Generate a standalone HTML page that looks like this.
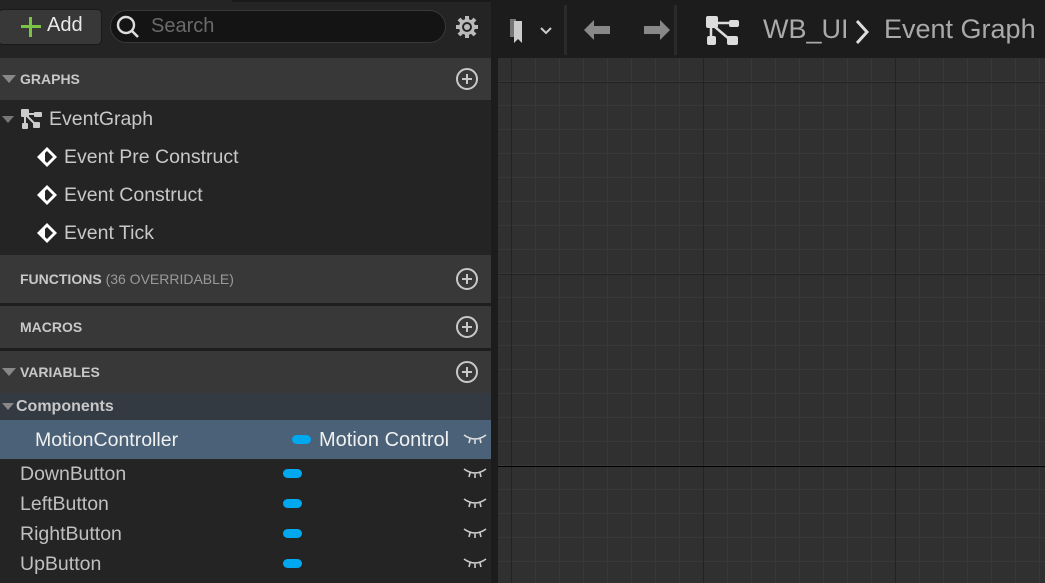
<!DOCTYPE html>
<html><head><style>
*{margin:0;padding:0;box-sizing:border-box}
body{width:1045px;height:583px;overflow:hidden;background:#242424;font-family:"Liberation Sans",sans-serif;position:relative;color:#c0c0c0}
.abs{position:absolute}
#left{left:0;top:0;width:491px;height:583px;background:#242424}
#strip{left:491px;top:0;width:7px;height:583px;background:#1c1c1c}
#graph{left:498px;top:0;width:547px;height:583px;background-color:#303030;
background-image:
linear-gradient(to right,transparent 13px,#232323 13px,#232323 14px,transparent 14px),
linear-gradient(to bottom,transparent 82px,#222 82px,#222 83px,transparent 83px),
linear-gradient(to right,transparent 23px,#383838 23px),
linear-gradient(to bottom,transparent 23px,#383838 23px);
background-size:192px 100%,100% 192px,24px 100%,100% 24px;
background-position:0 0,0 0,-10px 0,0 -14px}
.hline{left:498px;width:547px;height:1px;background:#000}
#tb{left:498px;top:0;width:547px;height:58px;background:#1c1c1c}
.hdr{left:0;width:491px;background:#383838;font-weight:bold;font-size:14px;color:#c8c8c8}
.hdr span.t{position:absolute;left:20px;top:50%;transform:translateY(-50%)}
.plus{position:absolute;right:13px;top:50%;margin-top:-11px;width:22px;height:22px;border:2px solid #c8c8c8;border-radius:50%}
.plus:before{content:"";position:absolute;left:4px;top:8px;width:10px;height:2px;background:#c8c8c8}
.plus:after{content:"";position:absolute;left:8px;top:4px;width:2px;height:10px;background:#c8c8c8}
.tri{position:absolute;left:2px;top:50%;margin-top:-4px;width:0;height:0;border-left:7px solid transparent;border-right:7px solid transparent;border-top:8px solid #888}
.item{left:64px;font-size:19.5px;color:#c8c8c8}
.dia{position:absolute;left:36px;width:22px;height:22px}
.var{font-size:19.5px;color:#c0c0c0}
.pill{width:19px;height:9px;border-radius:5px;background:#00a8f0}
</style></head><body>
<div id="left" class="abs"></div>
<div id="strip" class="abs"></div>
<div id="graph" class="abs"></div>
<div class="abs hline" style="top:466px"></div>
<div id="tb" class="abs"></div>
<div class="abs" style="left:232px;top:0;width:259px;height:2px;background:#1a1a1a"></div>

<div class="abs" style="left:-2px;top:9px;width:104px;height:36px;background:#383838;border:1px solid #1a1a1a;border-radius:5px"></div>
<div class="abs" style="left:21px;top:25px;width:20px;height:3px;background:#7cc444"></div>
<div class="abs" style="left:29px;top:17px;width:3px;height:20px;background:#7cc444"></div>
<div class="abs" style="left:47px;top:14px;font-size:20px;color:#e8e8e8">Add</div>
<div class="abs" style="left:110px;top:10px;width:336px;height:33px;background:#141414;border:1px solid #3a3a3a;border-radius:17px"></div>
<svg class="abs" style="left:114px;top:13px" width="28" height="28" viewBox="0 0 28 28"><circle cx="12" cy="12" r="8" fill="none" stroke="#ddd" stroke-width="2.4"/><line x1="18" y1="18" x2="24" y2="24" stroke="#ddd" stroke-width="2.6"/></svg>
<div class="abs" style="left:151px;top:15px;font-size:20px;color:#6a6a6a">Search</div>
<svg class="abs" style="left:455px;top:15px" width="24" height="24" viewBox="0 0 24 24"><g fill="#bbb"><circle cx="12" cy="12" r="8"/><g stroke="#bbb" stroke-width="4"><line x1="12" y1="1" x2="12" y2="23"/><line x1="1" y1="12" x2="23" y2="12"/><line x1="4" y1="4" x2="20" y2="20"/><line x1="20" y1="4" x2="4" y2="20"/></g></g><circle cx="12" cy="12" r="5" fill="#242424"/><circle cx="12" cy="12" r="3" fill="#bbb"/></svg>

<div class="abs hdr" style="top:58px;height:42px"><div class="tri"></div><span class="t">GRAPHS</span><div class="plus"></div></div>
<div class="abs" style="left:2px;top:116px;width:0;height:0;border-left:6px solid transparent;border-right:6px solid transparent;border-top:7px solid #777"></div>
<svg class="abs" style="left:20px;top:108px" width="24" height="22" viewBox="0 0 24 22"><g fill="#ccc"><rect x="1" y="1" width="8" height="8" rx="1"/><rect x="14" y="4" width="8" height="5" rx="1"/><rect x="2" y="15" width="6" height="6" rx="1"/><rect x="13" y="14" width="7" height="6" rx="1"/></g><g stroke="#ccc" stroke-width="2"><line x1="8" y1="6" x2="15" y2="6"/><line x1="5" y1="8" x2="5" y2="16"/><line x1="7" y1="8" x2="15" y2="16"/></g></svg>
<div class="abs item" style="left:49px;top:108px">EventGraph</div>

<svg class="abs dia" style="top:146px" viewBox="0 0 22 22"><path d="M11 1 L21 11 L11 21 L1 11Z" fill="#fff"/><path d="M11 5 L17 11 L11 17 L9 15 L9 7Z" fill="#242424"/></svg>
<div class="abs item" style="top:146px">Event Pre Construct</div>
<svg class="abs dia" style="top:184px" viewBox="0 0 22 22"><path d="M11 1 L21 11 L11 21 L1 11Z" fill="#fff"/><path d="M11 5 L17 11 L11 17 L9 15 L9 7Z" fill="#242424"/></svg>
<div class="abs item" style="top:184px">Event Construct</div>
<svg class="abs dia" style="top:222px" viewBox="0 0 22 22"><path d="M11 1 L21 11 L11 21 L1 11Z" fill="#fff"/><path d="M11 5 L17 11 L11 17 L9 15 L9 7Z" fill="#242424"/></svg>
<div class="abs item" style="top:222px">Event Tick</div>

<div class="abs hdr" style="top:255px;height:48px"><span class="t">FUNCTIONS <span style="font-weight:normal;color:#9a9a9a">(36 OVERRIDABLE)</span></span><div class="plus"></div></div>
<div class="abs" style="left:0;top:303px;width:491px;height:3px;background:#1e1e1e"></div>
<div class="abs hdr" style="top:306px;height:42px"><span class="t">MACROS</span><div class="plus"></div></div>
<div class="abs" style="left:0;top:348px;width:491px;height:3px;background:#1e1e1e"></div>
<div class="abs hdr" style="top:351px;height:42px"><div class="tri"></div><span class="t">VARIABLES</span><div class="plus"></div></div>
<div class="abs" style="left:0;top:393px;width:491px;height:27px;background:#343a42"></div>
<div class="abs" style="left:2px;top:403px;width:0;height:0;border-left:6px solid transparent;border-right:6px solid transparent;border-top:7px solid #888"></div>
<div class="abs" style="left:16px;top:398px;font-size:16px;font-weight:bold;color:#c8c8c8">Components</div>
<div class="abs" style="left:0;top:420px;width:491px;height:39px;background:#4a6177"></div>
<div class="abs var" style="left:35px;top:429px;color:#f0f0f0">MotionController</div>
<div class="abs pill" style="left:292px;top:435px"></div>
<div class="abs var" style="left:319px;top:429px;color:#f0f0f0;font-size:20px">Motion Control</div>

<div class="abs var" style="left:20px;top:463px">DownButton</div>
<div class="abs var" style="left:20px;top:493px">LeftButton</div>
<div class="abs var" style="left:20px;top:523px">RightButton</div>
<div class="abs var" style="left:20px;top:553px">UpButton</div>
<div class="abs pill" style="left:283px;top:469px"></div>
<div class="abs pill" style="left:283px;top:499px"></div>
<div class="abs pill" style="left:283px;top:529px"></div>
<div class="abs pill" style="left:283px;top:559px"></div>
<svg class="abs" style="left:463px;top:432px" width="24" height="14" viewBox="0 0 24 14"><g stroke="#ddd" stroke-width="1.6" fill="none"><path d="M1 3 Q12 11 23 3"/><line x1="7" y1="7" x2="6" y2="11"/><line x1="12" y1="8" x2="12" y2="12"/><line x1="17" y1="7" x2="18" y2="11"/></g></svg>
<svg class="abs" style="left:463px;top:466px" width="24" height="14" viewBox="0 0 24 14"><g stroke="#ccc" stroke-width="1.6" fill="none"><path d="M1 3 Q12 11 23 3"/><line x1="7" y1="7" x2="6" y2="11"/><line x1="12" y1="8" x2="12" y2="12"/><line x1="17" y1="7" x2="18" y2="11"/></g></svg>
<svg class="abs" style="left:463px;top:496px" width="24" height="14" viewBox="0 0 24 14"><g stroke="#ccc" stroke-width="1.6" fill="none"><path d="M1 3 Q12 11 23 3"/><line x1="7" y1="7" x2="6" y2="11"/><line x1="12" y1="8" x2="12" y2="12"/><line x1="17" y1="7" x2="18" y2="11"/></g></svg>
<svg class="abs" style="left:463px;top:526px" width="24" height="14" viewBox="0 0 24 14"><g stroke="#ccc" stroke-width="1.6" fill="none"><path d="M1 3 Q12 11 23 3"/><line x1="7" y1="7" x2="6" y2="11"/><line x1="12" y1="8" x2="12" y2="12"/><line x1="17" y1="7" x2="18" y2="11"/></g></svg>
<svg class="abs" style="left:463px;top:556px" width="24" height="14" viewBox="0 0 24 14"><g stroke="#ccc" stroke-width="1.6" fill="none"><path d="M1 3 Q12 11 23 3"/><line x1="7" y1="7" x2="6" y2="11"/><line x1="12" y1="8" x2="12" y2="12"/><line x1="17" y1="7" x2="18" y2="11"/></g></svg>

<svg class="abs" style="left:508px;top:17px" width="48" height="28" viewBox="0 0 48 28"><path d="M2 2 H8 V20 H2Z" fill="#777"/><path d="M6 4 H14 V26 L10 22 L6 26Z" fill="#ccc"/><path d="M33 11 L38 16 L43 11" stroke="#ccc" stroke-width="2" fill="none"/></svg>
<div class="abs" style="left:564px;top:5px;width:3px;height:50px;background:#2a2a2a"></div>
<svg class="abs" style="left:582px;top:17px" width="90" height="26" viewBox="0 0 90 26"><path d="M2 13 L12 3 V9 H28 V17 H12 V23Z" fill="#888"/><path d="M88 13 L78 3 V9 H62 V17 H78 V23Z" fill="#888"/></svg>
<div class="abs" style="left:674px;top:5px;width:3px;height:50px;background:#2a2a2a"></div>
<svg class="abs" style="left:705px;top:15px" width="36" height="32" viewBox="0 0 36 32"><g fill="#ddd"><rect x="1" y="1" width="12" height="12" rx="2"/><rect x="24" y="5" width="10" height="7" rx="2"/><rect x="2" y="21" width="9" height="9" rx="2"/><rect x="22" y="21" width="11" height="9" rx="2"/></g><g stroke="#ddd" stroke-width="2.5"><line x1="12" y1="8" x2="25" y2="8"/><line x1="6" y1="12" x2="6" y2="22"/><line x1="10" y1="12" x2="23" y2="23"/></g></svg>
<div class="abs" style="left:763px;top:14px;font-size:27px;color:#aaa">WB_UI</div>
<svg class="abs" style="left:852px;top:18px" width="20" height="28" viewBox="0 0 20 28"><path d="M5 3 L15 14 L5 25" stroke="#ddd" stroke-width="3" fill="none"/></svg>
<div class="abs" style="left:884px;top:14px;font-size:27px;color:#aaa">Event Graph</div>
</body></html>
